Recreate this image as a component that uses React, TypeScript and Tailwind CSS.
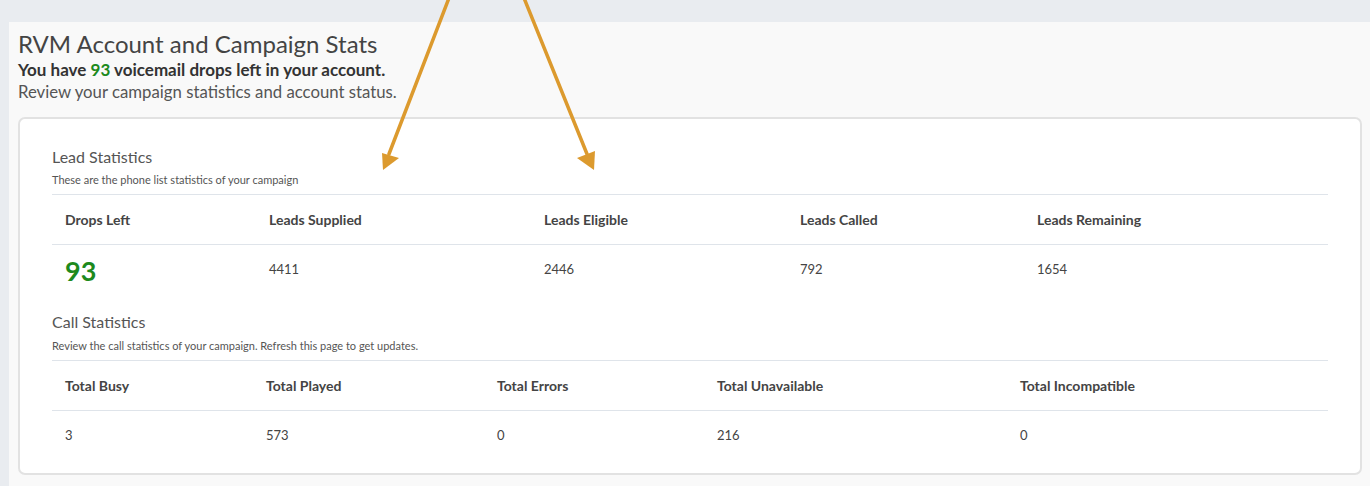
import React from 'react';

type Col = { label: string; value: string; big?: boolean };

const leadCols: Col[] = [
    { label: 'Drops Left', value: '93', big: true },
    { label: 'Leads Supplied', value: '4411' },
    { label: 'Leads Eligible', value: '2446' },
    { label: 'Leads Called', value: '792' },
    { label: 'Leads Remaining', value: '1654' },
];

const callCols: Col[] = [
    { label: 'Total Busy', value: '3' },
    { label: 'Total Played', value: '573' },
    { label: 'Total Errors', value: '0' },
    { label: 'Total Unavailable', value: '216' },
    { label: 'Total Incompatible', value: '0' },
];

function StatsTable({ cols, grid }: { cols: Col[]; grid: string }) {
    return (
        <div className="border-t border-[#dfe4ea]">
            {/* header row */}
            <div className={`grid ${grid} h-[50px] items-center border-b border-[#dfe4ea]`}>
                {cols.map((c) => (
                    <div key={c.label} className="pl-[13px] text-[14px] font-bold text-[#444]">
                        {c.label}
                    </div>
                ))}
            </div>
            {/* value row */}
            <div className={`grid ${grid} h-[50px] items-center`}>
                {cols.map((c) => (
                    <div
                        key={c.label}
                        className={
                            c.big
                                ? 'pl-[13px] text-[27px] font-bold leading-none text-[#1d8a1d]'
                                : 'pl-[13px] text-[13px] text-[#444]'
                        }
                    >
                        {c.value}
                    </div>
                ))}
            </div>
        </div>
    );
}

function Arrows() {
    return (
        <svg className="pointer-events-none absolute left-0 top-0" width="1370" height="486">
            <g stroke="#dc9a2e" strokeWidth={3.5} strokeLinecap="round">
                <line x1="449" y1="-2" x2="389" y2="154" />
                <line x1="524" y1="-2" x2="587" y2="154" />
            </g>
            <g fill="#dc9a2e">
                <polygon points="382,153 399,158 383,170" />
                <polygon points="577,158 595,151 594,170" />
            </g>
        </svg>
    );
}

export default function App() {
    return (
        <div className="relative min-h-[486px] bg-[#e9ecf0] pl-[9px] pt-[22px] font-['Lato',sans-serif]">
            <div className="min-h-[464px] bg-[#f9f9f9] pl-[9px] pr-[8px] pt-[7px] pb-[8px]">
                {/* Page heading */}
                <h1 className="text-[24px] leading-[30px] text-[#444]">RVM Account and Campaign Stats</h1>
                <p className="text-[17px] leading-[22px] font-bold text-[#333]">
                    You have <span className="text-[#1d8a1d]">93</span> voicemail drops left in your account.
                </p>
                <p className="text-[16.75px] leading-[22px] text-[#555]">
                    Review your campaign statistics and account status.
                </p>

                {/* Stats card */}
                <div className="mt-[14px] h-[358px] rounded-[7px] border-2 border-[#e2e2e2] bg-white px-[32px] pt-[26px]">
                    <h2 className="text-[16px] leading-[24px] text-[#555]">Lead Statistics</h2>
                    <p className="mt-[3px] mb-[6px] text-[11px] leading-[16px] text-[#555]">
                        These are the phone list statistics of your campaign
                    </p>
                    <StatsTable cols={leadCols} grid="grid-cols-[204px_275px_256px_237px_1fr]" />

                    <h2 className="mt-[15px] text-[16px] leading-[24px] text-[#555]">Call Statistics</h2>
                    <p className="mt-[4px] mb-[6px] text-[11px] leading-[16px] text-[#555]">
                        Review the call statistics of your campaign. Refresh this page to get updates.
                    </p>
                    <StatsTable cols={callCols} grid="grid-cols-[201px_231px_220px_303px_1fr]" />
                </div>
            </div>
            <Arrows />
        </div>
    );
}
